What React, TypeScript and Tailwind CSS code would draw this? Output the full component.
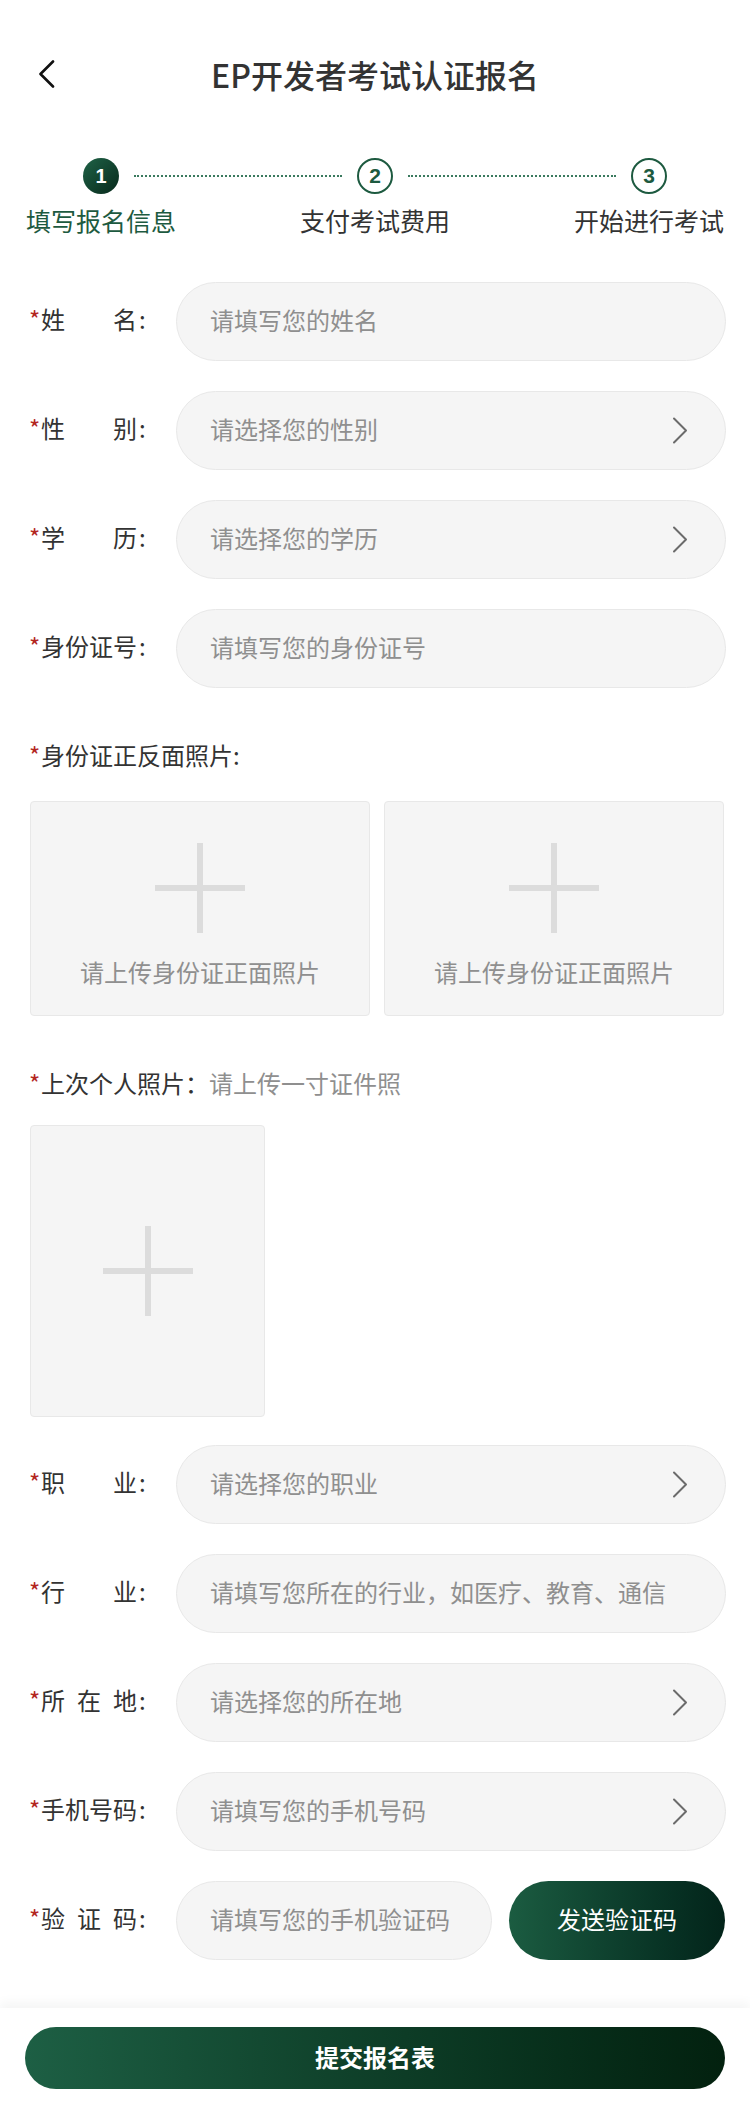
import React from "react";

const FONT = { fontFamily: '"Noto Sans CJK SC", "Noto Sans", sans-serif' };

function Chevron() {
  return (
    <svg width="16" height="27" viewBox="0 0 16 27" fill="none" className="shrink-0">
      <path d="M2 1.5 L14 13.5 L2 25.5" stroke="#6b6b6b" strokeWidth="2" strokeLinecap="round" strokeLinejoin="round" />
    </svg>
  );
}

function Plus() {
  return (
    <div className="relative w-[90px] h-[90px] shrink-0">
      <div className="absolute left-[42px] top-0 w-[6px] h-[90px] bg-[#dcdcdc]" />
      <div className="absolute top-[42px] left-0 h-[6px] w-[90px] bg-[#dcdcdc]" />
    </div>
  );
}

function Label({ chars }: { chars: string[] }) {
  return (
    <div className="flex items-center w-[176px] shrink-0 pl-[29px] pb-[5px] text-[24px] leading-[32px] text-[#333]">
      <span className="w-[12px] text-[#b3261e]">*</span>
      <div className="flex justify-between w-[96px]">
        {chars.map((c, i) => (
          <span key={i}>{c}</span>
        ))}
      </div>
      <span className="ml-[2px]">:</span>
    </div>
  );
}

function Field({
  chars,
  placeholder,
  arrow,
}: {
  chars: string[];
  placeholder: string;
  arrow?: boolean;
}) {
  return (
    <div className="flex items-center pr-[24px]">
      <Label chars={chars} />
      <div className="flex-1 h-[79px] rounded-full bg-[#f5f5f5] border border-[#e8e8e8] flex items-center justify-between pl-[33px] pr-[37px]">
        <span className="text-[24px] leading-[32px] pb-[4px] text-[#8f8f8f] whitespace-nowrap">{placeholder}</span>
        {arrow && <Chevron />}
      </div>
    </div>
  );
}

export default function App() {
  return (
    <div className="w-[750px] min-h-[2106px] bg-white flex flex-col" style={FONT}>
      {/* Header */}
      <div className="grid grid-cols-[1fr_auto_1fr] items-center h-[90px] mt-[29px]">
        <div className="pl-[38px] flex items-center">
          <svg width="18" height="28" viewBox="0 0 18 28" fill="none">
            <path d="M15 1.5 L2.5 14 L15 26.5" stroke="#111" strokeWidth="2.6" strokeLinecap="round" strokeLinejoin="round" />
          </svg>
        </div>
        <div className="text-[32px] font-medium text-[#333] leading-[40px]">EP开发者考试认证报名</div>
        <div />
      </div>

      {/* Steps */}
      <div className="flex items-center px-[83px] mt-[39px]">
        <div className="w-[36px] h-[36px] rounded-full bg-linear-to-br from-[#1f6347] to-[#082a1c] flex items-center justify-center text-white text-[20px] font-bold" style={{ fontFamily: '"Liberation Sans", Arial, sans-serif' }}>
          1
        </div>
        <div className="flex-1 mx-[15px] border-t-2 border-dotted border-[#3a7a5e]" />
        <div className="w-[36px] h-[36px] rounded-full border-2 border-[#1d5a40] flex items-center justify-center text-[#1d5a40] text-[21px] font-bold" style={{ fontFamily: '"Liberation Sans", Arial, sans-serif' }}>
          2
        </div>
        <div className="flex-1 mx-[15px] border-t-2 border-dotted border-[#3a7a5e]" />
        <div className="w-[36px] h-[36px] rounded-full border-2 border-[#1d5a40] flex items-center justify-center text-[#1d5a40] text-[21px] font-bold" style={{ fontFamily: '"Liberation Sans", Arial, sans-serif' }}>
          3
        </div>
      </div>
      <div className="flex justify-between px-[26px] mt-[11px] text-[25px] leading-[30px]">
        <span className="w-[150px] text-center whitespace-nowrap text-[#1d5a40]">填写报名信息</span>
        <span className="w-[150px] text-center whitespace-nowrap text-[#333]">支付考试费用</span>
        <span className="w-[150px] text-center whitespace-nowrap text-[#333]">开始进行考试</span>
      </div>

      {/* Form part 1 */}
      <div className="flex flex-col gap-[30px] mt-[47px]">
        <Field chars={["姓", "名"]} placeholder="请填写您的姓名" />
        <Field chars={["性", "别"]} placeholder="请选择您的性别" arrow />
        <Field chars={["学", "历"]} placeholder="请选择您的学历" arrow />
        <Field chars={["身", "份", "证", "号"]} placeholder="请填写您的身份证号" />
      </div>

      {/* ID photos */}
      <div className="mt-[51px] pl-[29px] text-[24px] leading-[32px] text-[#333] flex">
        <span className="w-[12px] text-[#b3261e]">*</span>
        <span>身份证正反面照片:</span>
      </div>
      <div className="flex gap-[14px] pl-[30px] pr-[26px] mt-[30px]">
        {[0, 1].map((i) => (
          <div key={i} className="w-[340px] h-[215px] bg-[#f5f5f5] border border-[#e8e8e8] rounded-[4px] flex flex-col items-center pt-[41px]">
            <Plus />
            <span className="mt-[23px] text-[24px] leading-[32px] text-[#8f8f8f] whitespace-nowrap">请上传身份证正面照片</span>
          </div>
        ))}
      </div>

      {/* Personal photo */}
      <div className="mt-[51px] pl-[29px] text-[24px] leading-[32px] flex">
        <span className="w-[12px] text-[#b3261e]">*</span>
        <span className="text-[#333]">上次个人照片：</span>
        <span className="text-[#8f8f8f]">请上传一寸证件照</span>
      </div>
      <div className="pl-[30px] mt-[26px]">
        <div className="w-[235px] h-[292px] bg-[#f5f5f5] border border-[#e8e8e8] rounded-[4px] flex items-center justify-center">
          <Plus />
        </div>
      </div>

      {/* Form part 2 */}
      <div className="flex flex-col gap-[30px] mt-[28px]">
        <Field chars={["职", "业"]} placeholder="请选择您的职业" arrow />
        <Field chars={["行", "业"]} placeholder="请填写您所在的行业，如医疗、教育、通信" />
        <Field chars={["所", "在", "地"]} placeholder="请选择您的所在地" arrow />
        <Field chars={["手", "机", "号", "码"]} placeholder="请填写您的手机号码" arrow />
        <div className="flex items-center pr-[25px]">
          <Label chars={["验", "证", "码"]} />
          <div className="w-[316px] h-[79px] rounded-full bg-[#f5f5f5] border border-[#e8e8e8] flex items-center pl-[33px]">
            <span className="text-[24px] leading-[32px] pb-[4px] text-[#8f8f8f] whitespace-nowrap">请填写您的手机验证码</span>
          </div>
          <div className="ml-[17px] flex-1 h-[79px] rounded-full bg-linear-to-r from-[#1b5c41] to-[#03241a] flex items-center justify-center">
            <span className="text-[24px] leading-[32px] pb-[4px] text-white">发送验证码</span>
          </div>
        </div>
      </div>

      {/* Bottom bar */}
      <div className="mt-[48px] h-[99px] bg-white shadow-[0_-6px_10px_rgba(0,0,0,0.04)] pt-[19px] px-[25px]">
        <div className="h-[62px] rounded-full bg-linear-to-r from-[#1d5f44] to-[#03210f] flex items-center justify-center">
          <span className="text-[24px] font-bold text-white leading-[32px] pb-[3px]">提交报名表</span>
        </div>
      </div>
    </div>
  );
}
